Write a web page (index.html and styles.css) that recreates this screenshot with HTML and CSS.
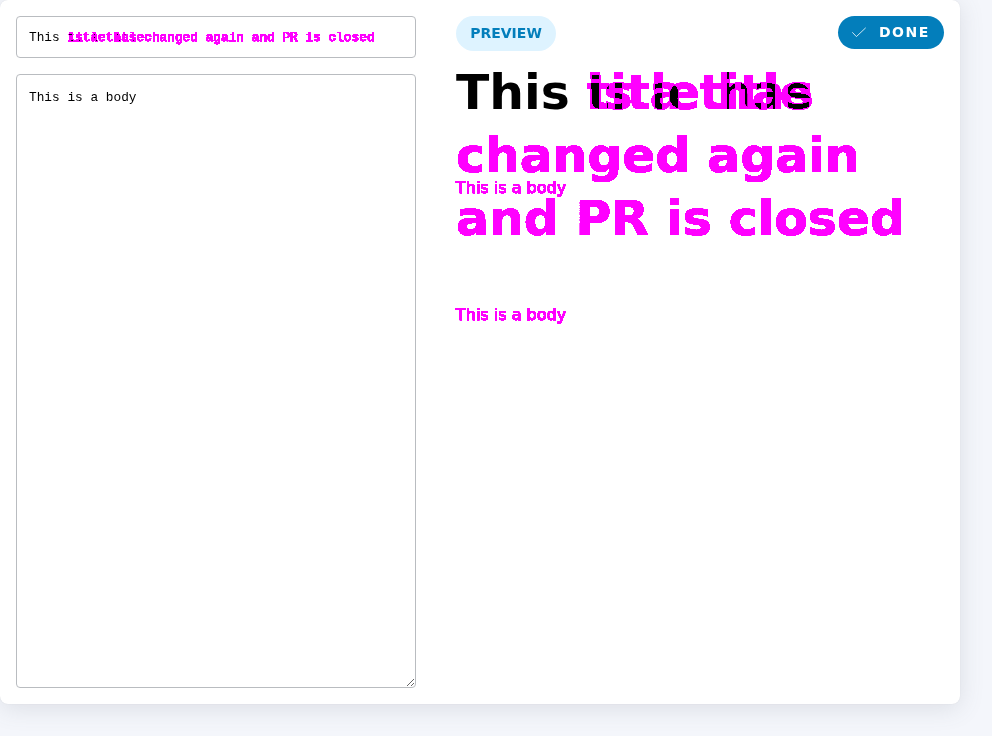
FILE: index.html
```html
<!DOCTYPE html>
<html lang="en">
<head>
<meta charset="utf-8">
<title>Editor</title>
<link rel="stylesheet" href="styles.css">
</head>
<body>
<svg class="defs" width="0" height="0" aria-hidden="true">
  <!-- One wording alone becomes magenta; the overlap of both becomes black. -->
  <filter id="compare" x="-5%" y="-5%" width="110%" height="110%" color-interpolation-filters="sRGB">
    <feFlood flood-color="#fff" result="paper"/>
    <feMerge><feMergeNode in="paper"/><feMergeNode in="SourceGraphic"/></feMerge>
    <feColorMatrix values="20 0 20 0 -0.5  20 0 20 0 -39  20 0 20 0 -0.5  0 0 0 1 0"/>
  </filter>
</svg>
<main class="card">
  <section class="editor">
    <div class="field">This <span class="diff"><span class="new">title has changed again and PR is closed</span><span class="old">is a title</span></span></div>
    <textarea class="field body-field">This is a body</textarea>
  </section>
  <section class="preview">
    <header class="toolbar">
      <span class="badge">PREVIEW</span>
      <button class="done"><svg width="14" height="14" viewBox="0 0 14 14" fill="none" stroke="currentColor" stroke-width="0.8"><path d="M0.3 6.3 4.4 10.6 13.7 1.8"/></svg><span class="label">DONE</span></button>
    </header>
    <div class="document">
      <h1>This <span class="diff"><span class="new">title has changed again and PR is closed</span><span class="old">is a title</span></span></h1>
      <p class="diff text"><span class="new">This is a body</span></p>
      <p class="diff text previous"><span class="new">This is a body</span></p>
    </div>
  </section>
</main>
</body>
</html>
```
FILE: styles.css
```css
* { box-sizing: border-box; }
body {
  margin: 0;
  height: 736px;
  overflow: hidden;
  background: #f4f6fb;
  color: #000;
  font-family: "DejaVu Sans", sans-serif;
}
.defs { position: absolute; }
.card {
  display: grid;
  grid-template-columns: 400px 488px;
  gap: 40px;
  width: 960px;
  height: 704px;
  padding: 16px;
  border-radius: 8px;
  background: #fff;
  box-shadow: 0 0 1px rgba(40, 41, 61, .12), 0 4px 24px rgba(96, 97, 112, .16);
}
.editor { display: flex; flex-direction: column; gap: 16px; }
.field {
  width: 400px;
  height: 42px;
  padding: 12px;
  border: 1px solid #b9bcc0;
  border-radius: 4px;
  background: #fff;
  color: #000;
  font: 12.8px/17px "Liberation Mono", monospace;
  white-space: pre;
}
.body-field { flex: 1; margin: 0; padding-top: 14px; resize: both; outline: none; }
.preview { min-width: 0; }
.toolbar { display: flex; justify-content: space-between; align-items: flex-start; height: 35px; }
.badge {
  width: 100px;
  height: 35px;
  border-radius: 18px;
  background: #def3ff;
  color: #037ebb;
  font-size: 14px;
  font-weight: 700;
  line-height: 34px;
  text-align: center;
}
.done {
  display: flex;
  align-items: center;
  gap: 13px;
  width: 106px;
  height: 33px;
  padding: 0 0 0 14px;
  border: 0;
  border-radius: 17px;
  background: #037ebb;
  color: #fff;
  font: 700 14px "DejaVu Sans", sans-serif;
  letter-spacing: 1.5px;
}
.label { padding-bottom: 2px; }
.document { position: relative; margin-top: 10px; }
h1 { margin: 0; font-size: 48.8px; font-weight: 700; line-height: 63px; }
.diff { position: relative; filter: url(#compare); mix-blend-mode: multiply; }
.new { color: #ff0; }
.old { position: absolute; top: 0; left: 0; color: #0ff; white-space: pre; mix-blend-mode: multiply; }
h1 .old { top: -3px; line-height: 63px; }
.field .old { top: -1px; line-height: 17px; }
.text .new, .field .diff { -webkit-text-stroke-width: .25px; }
.text { margin: 53px 0 0; font-size: 16px; line-height: 24px; }
.previous { position: absolute; top: 115px; left: 0; margin: 0; }
```
